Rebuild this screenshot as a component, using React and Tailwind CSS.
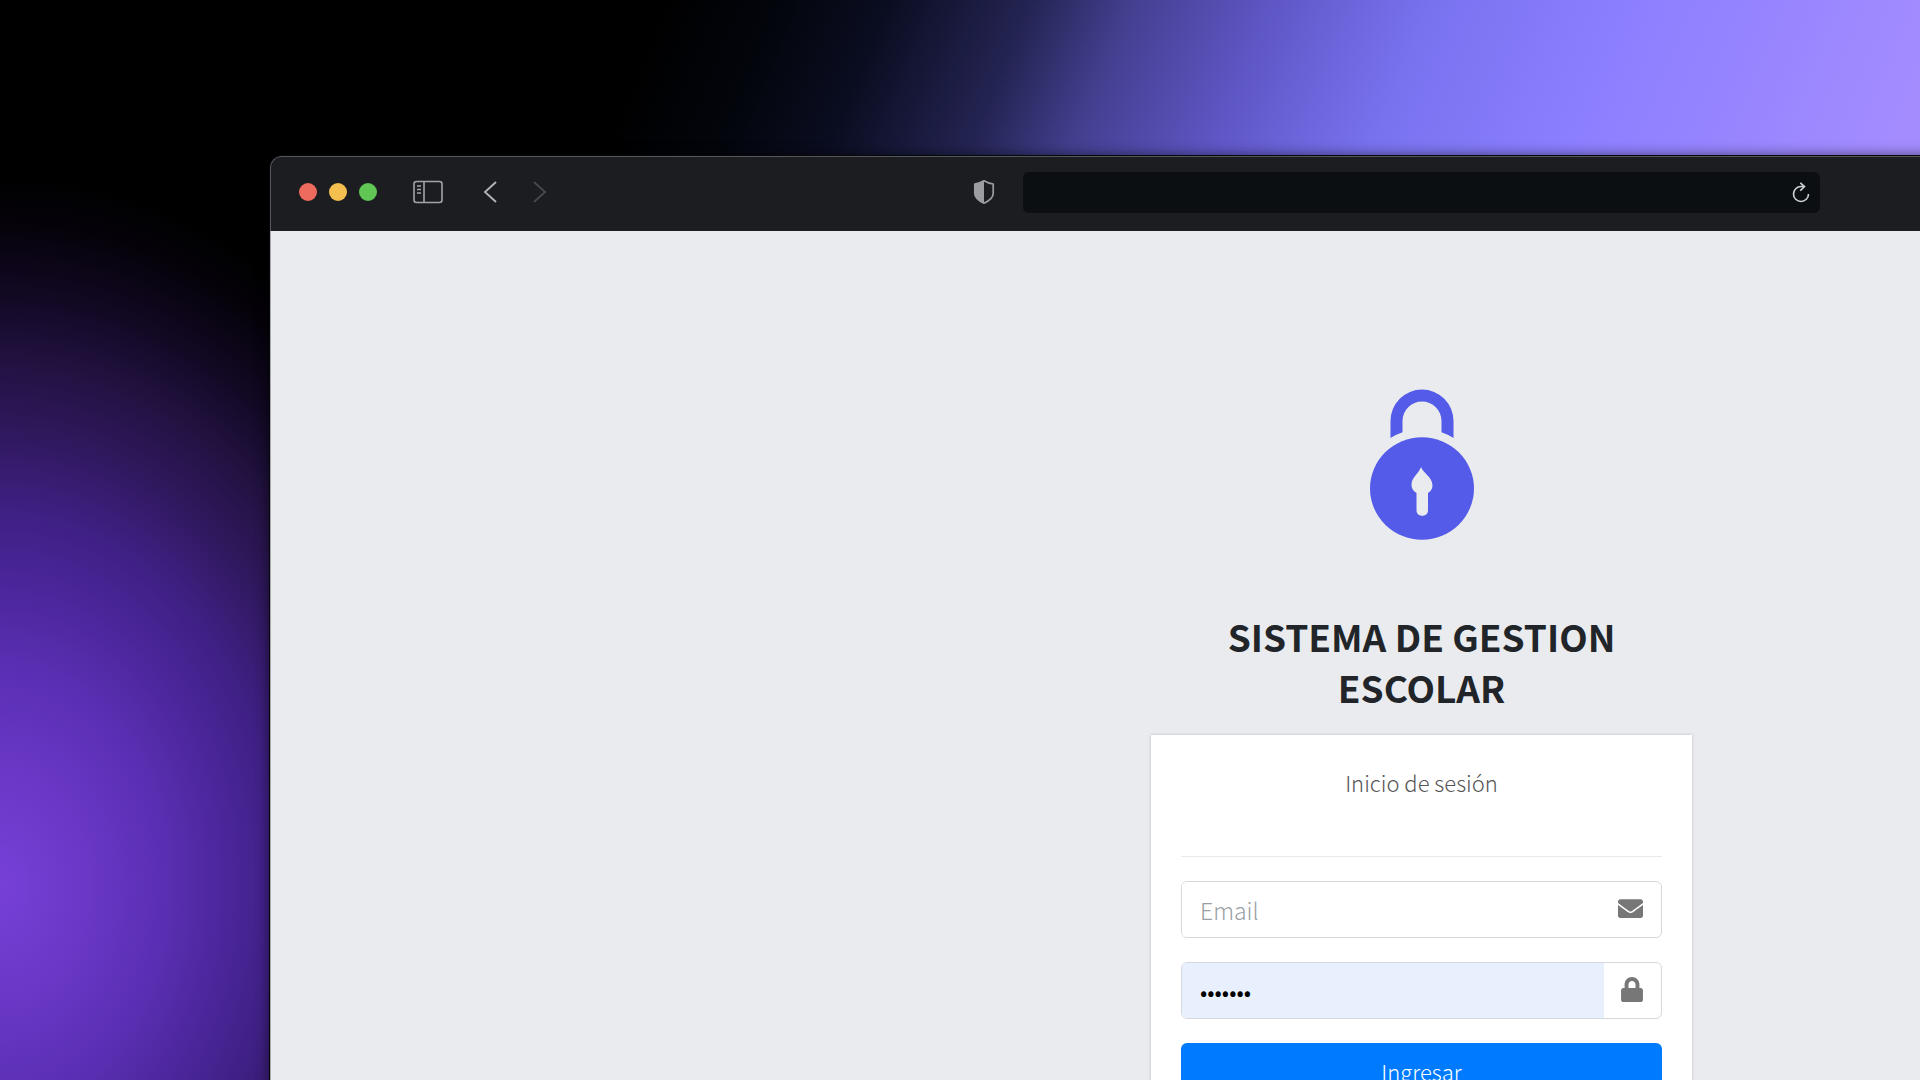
import React from "react";

const TRAFFIC_LIGHTS = [
  { label: "Cerrar ventana", color: "bg-[#ed6a5f]" },
  { label: "Minimizar ventana", color: "bg-[#f5bf50]" },
  { label: "Ampliar ventana", color: "bg-[#62c655]" },
];

function SidebarIcon() {
  return (
    <svg width="30" height="24" viewBox="0 0 30 24" fill="none" stroke="#a3a5a8" strokeWidth="1.6">
      <rect x="1" y="1.5" width="28" height="21" rx="2.5" />
      <path d="M11 1.5v21" />
      <path d="M4 6h4M4 9.5h4M4 13h4" strokeWidth="1.3" />
    </svg>
  );
}

function Chevron({ d, color }) {
  return (
    <svg width="14" height="22" viewBox="0 0 14 22" fill="none" stroke={color} strokeWidth="1.8">
      <path d={d} />
    </svg>
  );
}

function ShieldIcon() {
  return (
    <svg width="22" height="26" viewBox="0 0 22 26">
      <path
        d="M11 1.8C13.5 3.3 17 4.6 20.2 5v9.5c0 4-4.2 7.4-9.2 9.7C6 21.9 1.8 18.5 1.8 14.5V5C5 4.6 8.5 3.3 11 1.8Z"
        fill="none"
        stroke="#9b9da0"
        strokeWidth="1.7"
        strokeLinejoin="round"
      />
      <path d="M11 1.8v22.4C6 21.9 1.8 18.5 1.8 14.5V5C5 4.6 8.5 3.3 11 1.8Z" fill="#9b9da0" />
    </svg>
  );
}

function ReloadIcon() {
  return (
    <svg width="18" height="21" viewBox="0 0 18 21" fill="none" stroke="#cfd3d5" strokeWidth="1.6">
      <path d="M16.5 12A7.5 7.5 0 1 1 9 4.5h3" />
      <path d="M8.3 .8l4.2 3.8-4.2 4" />
    </svg>
  );
}

function PadlockLogo() {
  return (
    <svg width="106" height="152" viewBox="0 0 106 152" role="img" aria-label="Candado">
      <path
        d="M21.5 49V32a31.500 31.500 0 0 1 63 0v17q-5.500-3.600-12-5.800V32a19.500 19.500 0 0 0-39 0v11.200q-6.500 2.200-12 5.800Z"
        fill="#545be8"
      />
      <ellipse cx="53" cy="99.5" rx="52" ry="51.2" fill="#545be8" />
      <path
        d="M52 78c1.500 5.500 11.500 10 11.500 18.500 0 3.500-2 6-4.500 7.500v17.500c0 7-11.500 7-11.500 0V104c-3-1.500-5-4.500-5-8C42.500 88 49.500 85 52 78Z"
        fill="#e9ebee"
      />
    </svg>
  );
}

function EnvelopeIcon() {
  return (
    <svg width="25" height="19" viewBox="0 64 512 384" fill="#777">
      <path d="M502.300 190.800c3.900-3.100 9.700-.2 9.700 4.700V400c0 26.500-21.500 48-48 48H48c-26.500 0-48-21.500-48-48V195.600c0-5 5.700-7.800 9.700-4.700 22.400 17.400 52.100 39.500 154.100 113.600 21.100 15.400 56.700 47.800 92.200 47.600 35.700.3 72-32.800 92.300-47.600 102-74.100 131.600-96.300 154-113.700zM256 320c23.200.4 56.600-29.200 73.400-41.400 132.700-96.300 142.800-104.700 173.400-128.700 5.800-4.500 9.200-11.500 9.200-18.900v-19c0-26.500-21.500-48-48-48H48c-26.500 0-48 21.500-48 48v19c0 7.400 3.400 14.300 9.200 18.900 30.600 23.900 40.700 32.400 173.400 128.700 16.800 12.200 50.200 41.800 73.400 41.400z" />
    </svg>
  );
}

function LockIcon() {
  return (
    <svg width="22" height="25" viewBox="0 0 448 512" fill="#777">
      <path d="M400 224h-24v-72C376 68.200 307.800 0 224 0S72 68.200 72 152v72H48c-26.500 0-48 21.500-48 48v192c0 26.500 21.500 48 48 48h352c26.500 0 48-21.500 48-48V272c0-26.500-21.500-48-48-48zm-104 0H152v-72c0-39.700 32.300-72 72-72s72 32.300 72 72v72z" />
    </svg>
  );
}

function Toolbar() {
  return (
    <header className="grid h-[75px] grid-cols-[1fr_797px_1fr] items-center rounded-tl-xl border-l border-t border-[#55585a] bg-[#1c1d20] pb-1">
      <div className="flex items-center pl-7">
        <div className="flex gap-3">
          {TRAFFIC_LIGHTS.map((light) => (
            <button key={light.label} type="button" aria-label={light.label} className={`size-[18px] rounded-full ${light.color}`} />
          ))}
        </div>
        <button type="button" aria-label="Barra lateral" className="ml-9">
          <SidebarIcon />
        </button>
        <button type="button" aria-label="Atrás" className="ml-10">
          <Chevron d="M13 1L2 11l11 10" color="#b5b7b9" />
        </button>
        <button type="button" aria-label="Adelante" className="ml-9">
          <Chevron d="M1 1l11 10L1 21" color="#47494c" />
        </button>
        <button type="button" aria-label="Privacidad" className="ml-auto mr-7">
          <ShieldIcon />
        </button>
      </div>
      <div className="flex h-[41px] items-center rounded-md bg-[#0b0f12] pr-[10px]">
        <input type="text" aria-label="Dirección" className="h-full min-w-0 flex-1 bg-transparent px-4 text-gray-300 outline-none" />
        <button type="button" aria-label="Recargar">
          <ReloadIcon />
        </button>
      </div>
    </header>
  );
}

function Field({ id, label, type, placeholder, defaultValue, tint, icon }) {
  return (
    <div className="mb-6 flex h-[57px] overflow-hidden rounded-md border border-[#d5d9dd]">
      <label htmlFor={id} className="sr-only">
        {label}
      </label>
      <input
        id={id}
        type={type}
        placeholder={placeholder}
        defaultValue={defaultValue}
        className={`min-w-0 flex-1 px-[18px] text-[23px] leading-9 font-light text-black outline-none placeholder:text-[#999fa4] ${tint}`}
      />
      <span className="flex w-[57px] items-center justify-end pr-[18px] pb-[2px]">{icon}</span>
    </div>
  );
}

function Login() {
  return (
    <main className="flex flex-1 flex-col items-center border-l border-[#a9aaad] bg-[#e9ebee] pt-[158px] font-['Noto_Sans_CJK_JP','Noto_Sans',sans-serif]">
      <PadlockLogo />
      <div className="w-[541px]">
        <h1 className="mt-[70px] px-12 text-center text-[37px] leading-[51px] font-bold text-[#212529]">
          SISTEMA DE GESTION ESCOLAR
        </h1>
        <form className="mt-[22px] bg-white px-[30px] pt-[29px] pb-8 shadow-[0_0_3px_rgba(0,0,0,0.2)]" onSubmit={(e) => e.preventDefault()}>
          <p className="text-center text-[22px] leading-9 font-light text-[#555]">Inicio de sesión</p>
          <hr className="mt-14 mb-6 border-[#eaeaea]" />
          <Field id="email" label="Email" type="email" placeholder="Email" tint="bg-white" icon={<EnvelopeIcon />} />
          <Field id="password" label="Contraseña" type="password" defaultValue="escolar" tint="bg-[#e8effd]" icon={<LockIcon />} />
          <button type="submit" className="h-[57px] w-full rounded-md bg-[#007bff] text-[22px] font-light text-white">
            Ingresar
          </button>
        </form>
      </div>
    </main>
  );
}

export default function App() {
  return (
    <div className="h-screen overflow-hidden bg-[radial-gradient(28%_66%_at_0%_82%,#7640d8_0%,#6938c6_16%,#5b2fb4_30%,#4b269b_42%,#3f2085_52%,#2f185c_64%,rgba(46,24,88,0.75)_73%,rgba(42,20,84,0.42)_83%,rgba(30,14,60,0.16)_93%,transparent_100%),linear-gradient(112deg,#000_28%,#03050c_33%,#0a0d20_37.6%,#242453_43.8%,#434090_48.1%,#6058c8_54.4%,#7972ef_60.8%,#8c7fff_69.3%,#a48cff_82.9%)] pl-[270px] pt-[156px]">
      <div className="flex min-h-screen w-[calc(140%-8px)] flex-col rounded-tl-xl shadow-[0_0_14px_rgba(0,0,0,0.6),0_0_0_1px_#0a0a10]">
        <Toolbar />
        <Login />
      </div>
    </div>
  );
}
